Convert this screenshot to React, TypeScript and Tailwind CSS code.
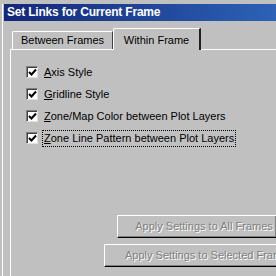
import React from "react";

const Check = () => (
  <span className="w-[12px] h-[12px] bg-white border border-t-[#808080] border-l-[#808080] border-r-[#e0e0e0] border-b-[#e0e0e0] shadow-[inset_1px_1px_0_#404040] flex items-center justify-center shrink-0">
    <svg width="9" height="9" viewBox="0 0 9 9">
      <path d="M1 4 L3.5 6.5 L8 1.5" stroke="#000" strokeWidth="2" fill="none" />
    </svg>
  </span>
);

const items = [
  { key: "A", rest: "xis Style" },
  { key: "G", rest: "ridline Style" },
  { key: "Z", rest: "one/Map Color between Plot Layers" },
  { key: "Z", rest: "one Line Pattern between Plot Layers", focus: true },
];

export default function App() {
  return (
    <div
      className="w-[276px] h-[276px] overflow-hidden bg-[#c0c0c0] pl-[2px] pt-[4px]"
      style={{ fontFamily: '"Liberation Sans", Arial, sans-serif' }}
    >
      <div className="h-full border-l border-white pl-[1px] flex flex-col">
        <div className="h-[17px] bg-gradient-to-r from-[#14277a] to-[#2d62b6] text-white font-bold text-[12px] tracking-[-0.2px] leading-[17px] pl-[3px] whitespace-nowrap">
          Set Links for Current Frame
        </div>
        <div className="pl-[6px] pt-[7px] flex-1 flex flex-col">
          {/* tabs */}
          <div className="flex items-end h-[21px] pl-[2px]">
            <div className="w-[101px] h-[18px] border-t border-l border-white rounded-tl-[2px] border-r border-r-[#404040] flex items-center justify-center text-[11px] text-black">
              Between Frames
            </div>
            <div className="w-[88px] h-[22px] -mb-[1px] border-t border-l border-white rounded-tl-[2px] border-r-2 border-r-[#202020] bg-[#c0c0c0] flex items-start pt-[3px] justify-center text-[11px] text-black relative">
              Within Frame
            </div>
          </div>
          <div className="flex-1 border-t border-l border-white pl-[15px] pt-[16px] flex flex-col">
            <div className="flex flex-col gap-[10px]">
              {items.map((it, i) => (
                <div key={i} className="flex items-center h-[12px] gap-[5px]">
                  <Check />
                  <span
                    className={
                      "text-[11px] text-black whitespace-nowrap leading-[15px] px-[1px] " +
                      (it.focus ? "outline-1 outline-dotted outline-black" : "")
                    }
                  >
                    <span className="underline">{it.key}</span>
                    {it.rest}
                  </span>
                </div>
              ))}
            </div>
            <div className="mt-auto mb-[9px] flex flex-col items-end gap-[6px] -mr-[40px]">
              <button className="w-[160px] h-[23px] mr-[39px] pl-[14px] border border-t-white border-l-white border-r-black border-b-black shadow-[inset_-1px_-1px_0_#808080] text-[11px] text-[#808080] [text-shadow:1px_1px_0_#ffffff] whitespace-nowrap">
                Apply Settings to All Frames
              </button>
              <button className="w-[212px] h-[23px] border border-t-white border-l-white border-r-black border-b-black shadow-[inset_-1px_-1px_0_#808080] text-[11px] text-[#808080] [text-shadow:1px_1px_0_#ffffff] whitespace-nowrap text-left pl-[20px]">
                Apply Settings to Selected Frames
              </button>
            </div>
          </div>
        </div>
      </div>
    </div>
  );
}
